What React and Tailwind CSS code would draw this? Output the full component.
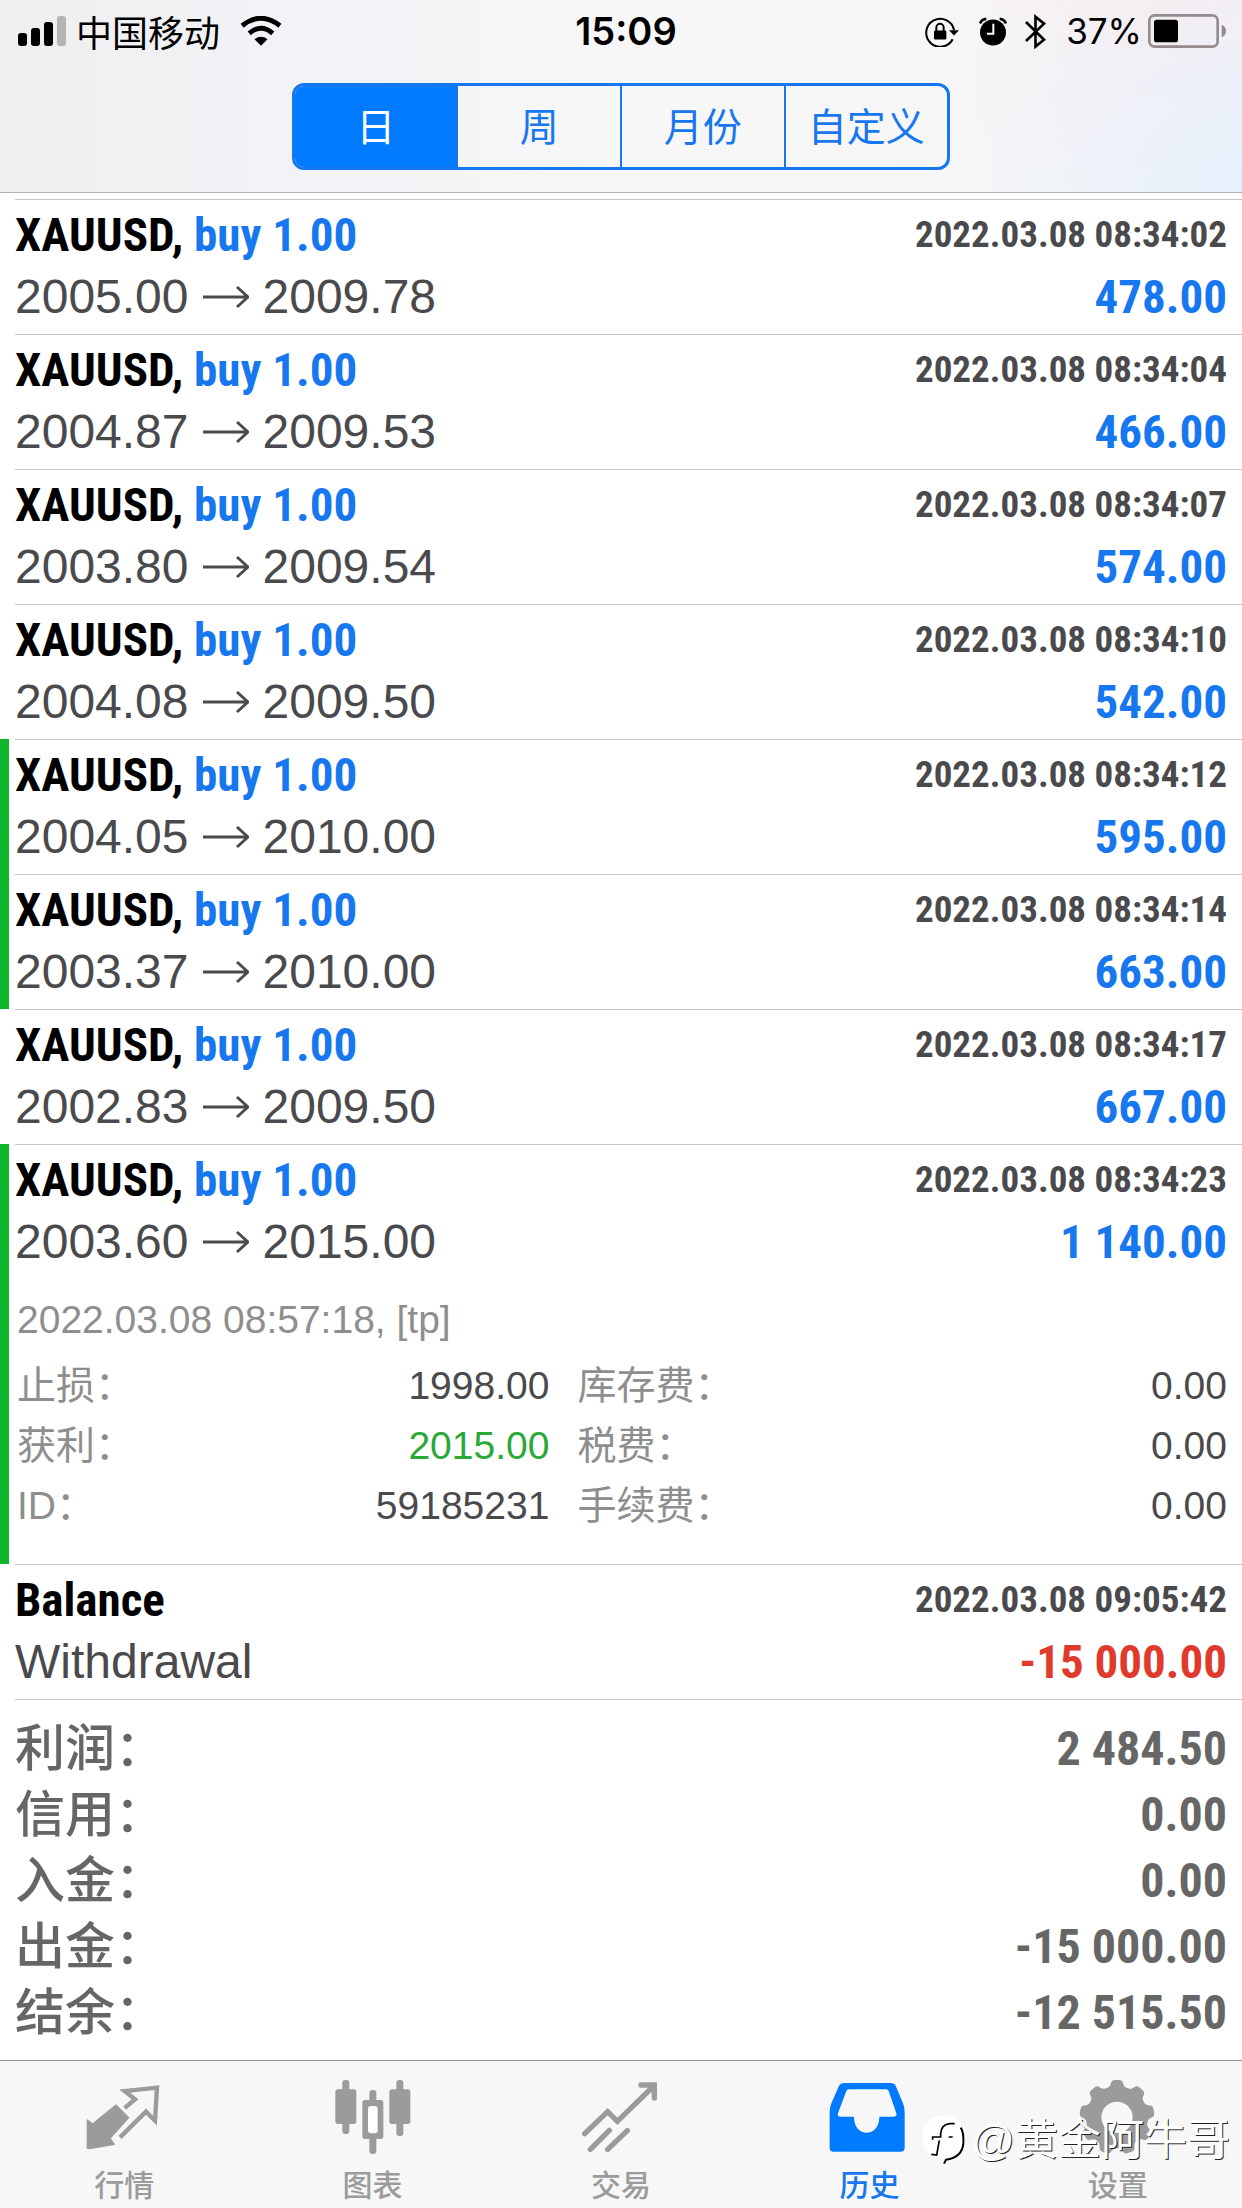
import React, { useState } from 'react';

const trades = [
  { id: 1, open: '2005.00', close: '2009.78', time: '2022.03.08 08:34:02', profit: '478.00' },
  { id: 2, open: '2004.87', close: '2009.53', time: '2022.03.08 08:34:04', profit: '466.00' },
  { id: 3, open: '2003.80', close: '2009.54', time: '2022.03.08 08:34:07', profit: '574.00' },
  { id: 4, open: '2004.08', close: '2009.50', time: '2022.03.08 08:34:10', profit: '542.00' },
  { id: 5, open: '2004.05', close: '2010.00', time: '2022.03.08 08:34:12', profit: '595.00', tp: true },
  { id: 6, open: '2003.37', close: '2010.00', time: '2022.03.08 08:34:14', profit: '663.00', tp: true },
  { id: 7, open: '2002.83', close: '2009.50', time: '2022.03.08 08:34:17', profit: '667.00' },
  {
    id: 8,
    open: '2003.60',
    close: '2015.00',
    time: '2022.03.08 08:34:23',
    profit: '1 140.00',
    tp: true,
    closed: '2022.03.08 08:57:18, [tp]',
    details: [
      ['止损', '1998.00', '库存费', '0.00'],
      ['获利', '2015.00', '税费', '0.00'],
      ['ID', '59185231', '手续费', '0.00'],
    ],
  },
];

const summary = [
  ['利润', '2 484.50'],
  ['信用', '0.00'],
  ['入金', '0.00'],
  ['出金', '-15 000.00'],
  ['结余', '-12 515.50'],
];

const periods = ['日', '周', '月份', '自定义'];

const condensed = "font-['Roboto_Condensed','Liberation_Sans',sans-serif] font-bold";

const QuotesIcon = () => (
  <svg viewBox="0 0 240 240" className="size-20 shrink-0" fill="none" stroke="currentColor">
    <path d="M10 216V132L26 144L96 87L134 125L78 187L91 205L16 218Z" fill="currentColor" strokeWidth="4" strokeLinejoin="round" />
    <path d="M122 96L153 70L122 45L219 35L213 134L186 107L108 184" strokeWidth="13" />
  </svg>
);

const ChartIcon = () => (
  <svg viewBox="0 0 240 240" className="size-20 shrink-0" fill="currentColor">
    <rect x="7" y="40" width="63" height="104" rx="8" />
    <rect x="28" y="12" width="21" height="162" rx="9" />
    <rect x="88" y="72" width="63" height="117" rx="8" />
    <rect x="109" y="42" width="21" height="192" rx="9" />
    <rect x="105" y="90" width="29" height="82" rx="9" fill="#fff" />
    <rect x="169" y="40" width="63" height="104" rx="8" />
    <rect x="190" y="12" width="21" height="168" rx="9" />
  </svg>
);

const TradeIcon = () => (
  <svg viewBox="0 0 240 240" className="size-20 shrink-0" fill="none" stroke="currentColor" strokeWidth="16" strokeLinecap="round">
    <path d="M11 173L80 107L109 136L218 30" strokeLinejoin="miter" />
    <path d="M180 27H220V66" />
    <path d="M28 220L85 163M80 220L139 164" />
  </svg>
);

const HistoryIcon = () => (
  <svg viewBox="0 0 240 240" className="size-20 shrink-0" fill="#007aff">
    <path
      fillRule="evenodd"
      d="M44 21H184q12 0 16 8L222 82q5 12 5 25V215q0 12-12 12H14q-12 0-12-12V107q0-13 5-25L30 29q4-8 14-8ZM60 40q-6 0-8 5L27 112q-3 10 6 10H75c0 32 18 48 38 48s38-16 38-48h44q10 0 7-10L179 45q-2-5-8-5Z"
    />
  </svg>
);

const SettingsIcon = () => (
  <svg viewBox="0 0 240 240" className="size-20 shrink-0" fill="currentColor">
    <circle cx="117" cy="124" r="70" fill="none" stroke="currentColor" strokeWidth="46" />
    {[0, 40, 80, 120, 160, 200, 240, 280, 320].map((angle) => (
      <path key={angle} d="M86 38Q96 34 99 20Q101 12 109 12H125Q133 12 135 20Q138 34 148 38L140 60H94Z" transform={`rotate(${angle} 117 124)`} />
    ))}
  </svg>
);

const tabs = [
  { name: '行情', icon: QuotesIcon },
  { name: '图表', icon: ChartIcon },
  { name: '交易', icon: TradeIcon },
  { name: '历史', icon: HistoryIcon },
  { name: '设置', icon: SettingsIcon },
];

const Arrow = () => (
  <svg viewBox="0 0 46 24" className="mx-[14px] h-6 w-[46px]" fill="none" stroke="currentColor" strokeWidth="3" aria-label="to">
    <path d="M0 12H44M34 2L45 12L34 22" />
  </svg>
);

const StatusBar = () => (
  <div className="grid grid-cols-3 items-center h-[62px] pl-[18px] pr-4 text-black">
    <div className="flex items-center">
      <svg viewBox="0 0 48 30" className="w-12 h-[30px]">
        <rect x="0" y="17" width="9" height="13" rx="3" />
        <rect x="13" y="12" width="9" height="18" rx="3" />
        <rect x="26" y="6" width="9" height="24" rx="3" />
        <rect x="39" y="0" width="9" height="30" rx="3" fill="#b4b4b4" />
      </svg>
      <span className="ml-[10px] font-['Noto_Sans_CJK_SC',sans-serif] text-4xl">中国移动</span>
      <svg viewBox="0 0 126 92" className="ml-5 w-[42px] h-[30px]" fill="none" stroke="#000" strokeWidth="15">
        <path d="M5 30Q63 -16 121 30" />
        <path d="M27 53Q63 22 99 53" />
        <path d="M63 91L43 71Q63 56 83 71Z" fill="#000" stroke="none" />
      </svg>
    </div>
    <div className="pl-2 text-center font-['Inter','Noto_Sans',sans-serif] text-[38px] font-semibold">15:09</div>
    <div className="flex items-center justify-end">
      <svg viewBox="0 0 102 92" className="w-[34px] h-[31px]" fill="none" stroke="#000" strokeWidth="6">
        <path d="M83 69A42 42 0 1 1 87 42" />
        <path d="M72 42H102L87 58Z" fill="#000" stroke="none" />
        <path d="M34 45V34A11 11 0 0 1 56 34V45" />
        <rect x="27" y="43" width="37" height="27" rx="4" fill="#000" stroke="none" />
      </svg>
      <svg viewBox="0 0 84 86" className="ml-5 w-7 h-[29px]">
        <circle cx="42" cy="46" r="39" />
        <path d="M3 19Q8 6 22 5M81 19Q76 6 62 5" fill="none" stroke="#000" strokeWidth="8" />
        <path d="M43 20V50H24" fill="none" stroke="#fff" strokeWidth="6" />
      </svg>
      <svg viewBox="0 0 64 106" className="ml-[18px] w-[21px] h-[35px]" fill="none" stroke="#000" strokeWidth="8">
        <path d="M3 24L58 78L32 99V8L58 29L3 82" />
      </svg>
      <span className="ml-5 font-['Inter','Noto_Sans',sans-serif] text-[35px]">37%</span>
      <svg viewBox="0 0 234 102" className="ml-[6px] w-[78px] h-[34px]">
        <rect x="4" y="4" width="205" height="94" rx="16" fill="none" stroke="#938b8c" strokeWidth="8" />
        <rect x="18" y="17" width="72" height="68" rx="8" />
        <path d="M221 32Q234 38 234 51T221 70Z" fill="#938b8c" />
      </svg>
    </div>
  </div>
);

const TradeRow = ({ trade }) => (
  <li className="relative ml-[15px] pr-[15px] border-t border-[#c8c8c8]">
    {trade.tp && <span className="absolute -left-[15px] -top-px bottom-0 w-[9px] bg-[#0fb52d]" />}
    <div className={`flex h-[70px] items-center justify-between ${condensed}`}>
      <h2 className="text-[47px] text-black">
        XAUUSD, <span className="text-[#1677ee]">buy 1.00</span>
      </h2>
      <time className="text-[37px] text-[#4a4a4d]">{trade.time}</time>
    </div>
    <div className="flex h-16 pb-[10px] items-center justify-between">
      <p className="flex items-center text-5xl text-[#4a4a4d]">
        {trade.open}
        <Arrow />
        {trade.close}
      </p>
      <strong className={`text-[47px] text-[#1677ee] ${condensed}`}>{trade.profit}</strong>
    </div>
    {trade.details && (
      <div className="pt-[5px] pb-7 pl-[2px] text-[39px] text-[#8e8e8e]">
        <p className="flex h-[72px] items-center">{trade.closed}</p>
        <table className="w-full">
          <tbody>
            {trade.details.map(([label, value, feeLabel, fee]) => (
              <tr key={label} className="h-[60px] leading-[60px]">
                <th scope="row" className="w-[20%] text-left font-normal">{label}：</th>
                <td className={label === '获利' ? 'w-[24%] text-right text-[#2aa838]' : 'w-[24%] text-right text-[#4a4a4d]'}>
                  {value}
                </td>
                <th scope="row" className="pl-7 text-left font-normal">{feeLabel}：</th>
                <td className="text-right text-[#4a4a4d]">{fee}</td>
              </tr>
            ))}
          </tbody>
        </table>
      </div>
    )}
  </li>
);

const Watermark = () => (
  <div className="absolute right-3 bottom-[38px] flex items-center text-white pointer-events-none">
    <svg viewBox="0 0 135 150" className="w-[45px] h-[50px]">
      <path d="M62 2C104 2 128 22 130 66C131 106 104 130 66 148L70 130C24 130 2 106 2 66C2 24 24 2 62 2Z" fill="#fff" />
      <path d="M66 146L72 134Q120 128 124 86Q126 52 116 38" fill="none" stroke="#000" strokeWidth="6" />
      <path d="M98 26H84Q58 28 56 56V66H32V74M52 76L44 120L28 118M80 66H92" fill="none" stroke="#000" strokeWidth="5" />
    </svg>
    <span className="ml-1 text-[43px] leading-[60px] [text-shadow:1px_1px_0_#222]">@黄金阿牛哥</span>
  </div>
);

const App = () => {
  const [period, setPeriod] = useState('日');
  const [activeTab, setActiveTab] = useState('历史');

  return (
    <div className="flex min-h-screen flex-col bg-white font-['Liberation_Sans','Noto_Sans_CJK_SC',sans-serif]">
      <header className="border-b border-[#b2b2b2] bg-[radial-gradient(circle_at_100%_100%,#e6f0fc,transparent_25%),radial-gradient(circle_at_95%_0%,#fbecec,transparent_20%),linear-gradient(to_right,#efefef,#f2f3f7_25%,#f7f7f7_50%,#f6f6f6)]">
        <StatusBar />
        <div className="flex justify-center pt-[21px] pb-[22px]">
          <div className="flex h-[87px] w-[53%] overflow-hidden rounded-xl border-3 border-[#1677ee] font-['Noto_Sans_CJK_SC',sans-serif] text-[39px]">
            {periods.map((item) => (
              <button
                key={item}
                onClick={() => setPeriod(item)}
                className={
                  item === period
                    ? 'flex-1 pb-1 bg-[#007aff] text-white'
                    : 'flex-1 pb-1 border-l-2 border-[#1677ee] text-[#1677ee]'
                }
              >
                {item}
              </button>
            ))}
          </div>
        </div>
      </header>

      <main className="flex-1 pt-[6px]">
        <ul>
          {trades.map((trade) => (
            <TradeRow key={trade.id} trade={trade} />
          ))}
          {/* Balance operation */}
          <li className="ml-[15px] pr-[15px] border-y border-[#c8c8c8]">
            <div className={`flex h-[70px] items-center justify-between ${condensed}`}>
              <h2 className="text-[47px] text-black">Balance</h2>
              <time className="text-[37px] text-[#4a4a4d]">2022.03.08 09:05:42</time>
            </div>
            <div className="flex h-16 pb-[10px] items-center justify-between">
              <p className="text-5xl text-[#4a4a4d]">Withdrawal</p>
              <strong className={`text-[47px] text-[#df3a2c] ${condensed}`}>-15 000.00</strong>
            </div>
          </li>
        </ul>

        {/* Account summary */}
        <dl className="px-[15px] pt-4 text-[#666]">
          {summary.map(([label, value]) => (
            <div key={label} className="flex h-[66px] items-center justify-between">
              <dt className="text-[50px] font-medium">{label}：</dt>
              <dd className={`text-5xl ${condensed}`}>{value}</dd>
            </div>
          ))}
        </dl>
      </main>

      <nav className="relative flex border-t border-[#8e8e92] bg-[#f7f7f7]">
        {tabs.map(({ name, icon: Icon }) => (
          <button
            key={name}
            onClick={() => setActiveTab(name)}
            className={
              name === activeTab
                ? 'flex flex-1 flex-col items-center gap-2 pt-[15px] text-[30px] leading-[44px] font-medium text-[#1677ee]'
                : 'flex flex-1 flex-col items-center gap-2 pt-[15px] text-[30px] leading-[44px] font-medium text-[#9b9b9b]'
            }
          >
            <Icon />
            {name}
          </button>
        ))}
        <Watermark />
      </nav>
    </div>
  );
};

export default App;
